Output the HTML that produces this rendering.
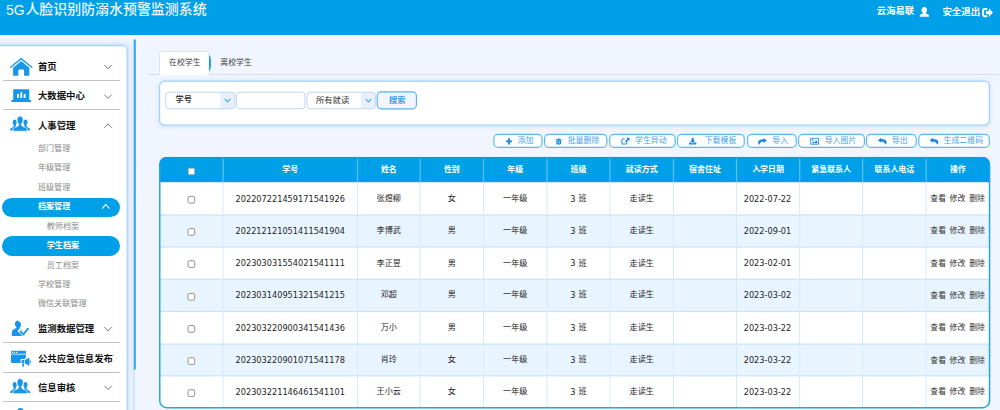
<!DOCTYPE html>
<html lang="zh-CN"><head><meta charset="utf-8"><title>5G人脸识别防溺水预警监测系统</title>
<style>
html,body{margin:0;padding:0}
body{width:1000px;height:410px;overflow:hidden;background:#f0f5ff;position:relative;font-family:"Liberation Sans",sans-serif}
.t{position:absolute;white-space:nowrap;overflow:visible;line-height:1;display:block;font-family:"Liberation Sans","Noto Sans CJK SC",sans-serif}
.hd{color:#f1f6ff;font-weight:500}
.w{color:#fff;font-weight:bold}
.k{color:#111;font-weight:bold}
.g{color:#8a8a8a}
.c4{color:#444}
.c2{color:#222;font-weight:500}
.c3{color:#333}
.sb{color:#3a9fe9;font-weight:bold}
.bt{color:#4a9fe8}
.cd{color:#1e1e1e}
.d{color:#1e1e1e;font-family:"DejaVu Sans","Liberation Sans",sans-serif}
.i{position:absolute;overflow:visible;pointer-events:none}
.hdr{position:absolute;left:0;top:0;width:1000px;height:35px;background:#00a0e9}
.side{position:absolute;left:-6px;top:45px;width:133.500px;height:380px;background:#fff;border-radius:5px;box-shadow:0 0 4px 1px rgba(150,200,252,.55);box-sizing:border-box}
.gut{position:absolute;left:128.500px;top:44px;width:4.3px;height:370px;background:#e7eeff}
.gutl{position:absolute;left:133.400px;top:368px;width:1.2px;height:50px;background:#a9d6fa}
.thumb{position:absolute;left:133.300px;top:39.300px;width:2.600px;height:330.500px;border-radius:1.3px;background:linear-gradient(90deg,#a5d9f7 0,#36a9eb 50%,#2aa4ea 100%)}
.sep{position:absolute;left:2.8px;width:117.200px;height:1.2px;background:#c2c2c2}
.pill{position:absolute;left:2.100px;width:117.900px;border-radius:10px;background:#00a0e9}
.tabline{position:absolute;left:147.800px;top:74px;width:860px;height:1px;background:#dcdfe6}
.tab{position:absolute;left:159px;top:51px;width:51px;height:23.800px;box-sizing:border-box;background:#fff;border:1px solid #e2e4ea;border-bottom:none;border-radius:3px 3px 0 0}
.tabarc{position:absolute;left:209.200px;top:55.200px;width:2.3px;height:15.4px;background:#1b9fe8;border-radius:0 100% 100% 0/0 50% 50% 0}
.panel{position:absolute;left:160px;top:81.500px;width:829px;height:43.5px;box-sizing:border-box;background:#fff;border-radius:5px;box-shadow:0 0 4px 1px rgba(150,200,252,.5)}
.sel{position:absolute;top:91.7px;height:17.5px;box-sizing:border-box;background:#fff;border:1px solid #c3d6f4;border-radius:3px;overflow:hidden}
.sel i{position:absolute;right:0;top:0;width:14.5px;height:100%;background:#e9f1fe}
.sbtn{position:absolute;left:376.600px;top:91.3px;width:40.4px;height:18.100px;box-sizing:border-box;background:#f0f5ff;border:1px solid #58b2f0;border-radius:4px}
.btn{position:absolute;top:134px;height:13.4px;box-sizing:border-box;background:#fff;border:1px solid #62b7f1;border-radius:5px}
.tbl{position:absolute;left:159.600px;top:157px;width:830.200px;height:251px;border-radius:7px;overflow:hidden;background:#fff}
.tblb{position:absolute;left:159.100px;top:157px;width:831.200px;height:251.300px;border-radius:7.5px;box-sizing:border-box;border:1.2px solid #229fe8;border-top:none;pointer-events:none}
.th{position:absolute;left:0;top:0;width:100%;height:25.100px;background:#00a0e9}
.tr{position:absolute;left:0;width:100%;box-sizing:border-box;border-bottom:1px solid #bfe3fa;background:#fff}
.tr.odd{background:#e9f5fe}
.vl{position:absolute;top:25px;width:1px;height:230px;background:#c6e6fb}
.vlh{position:absolute;top:1.5px;width:1.2px;height:23.600px;background:#4fb8f0}
.cb{position:absolute;width:7.8px;height:7.8px;box-sizing:border-box;border:1px solid #858585;border-radius:1.6px;background:#fff}
.cb.h{width:7.4px;height:7.2px;border-color:#9a9a9a;border-radius:1.2px}
</style></head><body>
<div class="hdr"></div>
<svg class="i" style="left:0;top:0" width="1000" height="410"><rect x="0" y="35.200" width="1000" height="1.3" fill="#fcfdff"/></svg>
<span class="t hd" style="left:5.90px;top:2.92px;width:20.04px;height:16.80px;font-size:14.00px;">5G</span>
<span class="t hd" style="left:25.40px;top:2.95px;width:182.35px;height:16.74px;font-size:13.95px;">人脸识别防溺水预警监测系统</span>
<span class="t w" style="left:876.80px;top:6.74px;width:38.40px;height:11.22px;font-size:9.35px;">云海易联</span>
<span class="t w" style="left:942.40px;top:6.69px;width:38.80px;height:11.34px;font-size:9.45px;">安全退出</span>
<svg class="i" style="left:919px;top:6px" width="11" height="12" viewBox="0 0 11 12"><path fill="#fff" d="M5.3 1.1c1.6 0 2.7 1.2 2.7 2.9 0 1.1-.5 2.2-1.200 2.800 0 .5.200.8.900 1.100l1.500.6c.6.3.8.7.8 1.300v1H.7v-1c0-.6.200-1 .8-1.300l1.500-.6c.7-.3.900-.6.900-1.100C3.100 6.200 2.600 5.100 2.600 4c0-1.700 1.100-2.900 2.700-2.900z"/></svg>
<svg class="i" style="left:981px;top:7px" width="13" height="11" viewBox="0 0 13 11"><path fill="none" stroke="#fff" stroke-width="2" stroke-linejoin="round" stroke-linecap="round" d="M5.500 2H3.500C2.700 2 2.100 2.600 2.100 3.400v4.400c0 .8.600 1.400 1.400 1.400h2"/><path fill="#fff" d="M4.900 3.900h3V1.200l4 4.400-4 4.400V7.300h-3z"/></svg>
<div class="side"></div>
<div class="gut"></div>
<svg class="i" style="left:0;top:0" width="1000" height="410"><defs><linearGradient id="tg" x1="0" x2="1" y1="0" y2="0"><stop offset="0" stop-color="#a8dbf8"/><stop offset=".45" stop-color="#38aaeb"/><stop offset="1" stop-color="#2aa4ea"/></linearGradient></defs><rect x="133.400" y="368" width="1.1" height="50" fill="#b4dcfa"/><rect x="133.300" y="39.300" width="2.500" height="330.400" rx="1.250" fill="url(#tg)"/><path d="M-5 45.600H122.700a4.500 4.500 0 0 1 4.500 4.500V415" fill="none" stroke="#a6d3fb" stroke-width="1.300"/></svg>
<span class="t k" style="left:37.90px;top:61.71px;width:19.80px;height:11.28px;font-size:9.40px;">首页</span>
<svg class="i" style="left:0;top:0" width="1000" height="410"><path d="M104.50 64.95L108.10 68.85L111.70 64.95" fill="none" stroke="#757575" stroke-width="1.0"/></svg>
<div class="sep" style="top:80.0px"></div>
<span class="t k" style="left:37.90px;top:91.41px;width:48.00px;height:11.28px;font-size:9.40px;">大数据中心</span>
<svg class="i" style="left:0;top:0" width="1000" height="410"><path d="M104.50 94.65L108.10 98.55L111.70 94.65" fill="none" stroke="#757575" stroke-width="1.0"/></svg>
<div class="sep" style="top:109.1px"></div>
<span class="t k" style="left:37.90px;top:120.61px;width:38.60px;height:11.28px;font-size:9.40px;">人事管理</span>
<svg class="i" style="left:0;top:0" width="1000" height="410"><path d="M104.50 127.75L108.10 123.85L111.70 127.75" fill="none" stroke="#757575" stroke-width="1.0"/></svg>
<span class="t g" style="left:37.90px;top:145.28px;width:33.48px;height:9.74px;font-size:8.12px;">部门管理</span>
<span class="t g" style="left:37.90px;top:164.48px;width:33.48px;height:9.74px;font-size:8.12px;">年级管理</span>
<span class="t g" style="left:37.90px;top:184.18px;width:33.48px;height:9.74px;font-size:8.12px;">班级管理</span>
<div class="pill" style="top:197.7px;height:19.4px"></div>
<span class="t w" style="left:37.90px;top:203.28px;width:33.48px;height:9.74px;font-size:8.12px;">档案管理</span>
<svg class="i" style="left:0;top:0" width="1000" height="410"><path d="M102.10 208.70L105.80 204.50L109.50 208.70" fill="none" stroke="#fff" stroke-width="1.1"/></svg>
<span class="t g" style="left:46.70px;top:222.78px;width:33.48px;height:9.74px;font-size:8.12px;">教师档案</span>
<div class="pill" style="top:236.1px;height:19.8px"></div>
<span class="t w" style="left:46.70px;top:242.08px;width:33.48px;height:9.74px;font-size:8.12px;">学生档案</span>
<span class="t g" style="left:46.70px;top:261.78px;width:33.48px;height:9.74px;font-size:8.12px;">员工档案</span>
<span class="t g" style="left:37.90px;top:280.98px;width:33.48px;height:9.74px;font-size:8.12px;">学校管理</span>
<span class="t g" style="left:37.90px;top:300.08px;width:49.72px;height:9.74px;font-size:8.12px;">微信关联管理</span>
<span class="t k" style="left:37.90px;top:323.81px;width:57.40px;height:11.28px;font-size:9.40px;">监测数据管理</span>
<svg class="i" style="left:0;top:0" width="1000" height="410"><path d="M104.50 327.05L108.10 330.95L111.70 327.05" fill="none" stroke="#757575" stroke-width="1.0"/></svg>
<div class="sep" style="top:342.2px"></div>
<span class="t k" style="left:37.90px;top:353.51px;width:76.20px;height:11.28px;font-size:9.40px;">公共应急信息发布</span>
<div class="sep" style="top:371.6px"></div>
<span class="t k" style="left:37.90px;top:382.51px;width:38.60px;height:11.28px;font-size:9.40px;">信息审核</span>
<svg class="i" style="left:0;top:0" width="1000" height="410"><path d="M104.50 385.75L108.10 389.65L111.70 385.75" fill="none" stroke="#757575" stroke-width="1.0"/></svg>
<div class="sep" style="top:400.9px"></div>
<svg class="i" style="left:0;top:0" width="1000" height="410" viewBox="0 0 1000 410"><path d="M10.6 67.3L21.2 58.700L31.8 67.3" fill="none" stroke="#1795ea" stroke-width="1.35" stroke-linejoin="miter" stroke-linecap="round"/><path fill="#1795ea" d="M13.1 67.7L21.2 60.9L29.3 67.7V75.7H24.1V70.6Q24.1 69.6 23.1 69.6H19.3Q18.3 69.6 18.3 70.6V75.7H13.100z"/></svg>
<svg class="i" style="left:0;top:0" width="1000" height="410" viewBox="0 0 1000 410"><path fill="#1795ea" d="M13.2 90.1q0-.8.800-.8h14.500q.8 0 .8.800V100.100h1.400q.6 0 .6.600v.4q0 .8-.8.800H12q-.8 0-.8-.8v-.4q0-.6.600-.6h1.400z"/><path fill="#fff" d="M17 94.100h1.900v3.900H17zM20.300 92.200h1.900v5.800h-1.900zM23.700 94.100h1.900v3.900h-1.900z"/></svg>
<svg class="i" style="left:0;top:0" width="1000" height="410" viewBox="0 0 1000 410"><g transform="translate(0,0)" fill="#1795ea"><path d="M14.7 119.6C15.9 119.6 16.7 120.7 16.7 122.2C16.7 123.3 16.3 124.3 15.700 124.900L15.7 125.400Q15.7 126 16.5 126.300L14 130.500L10.7 130.500Q9.9 130.500 10 129.700Q10.200 128.500 11.400 127.900L13.100 127.100Q13.700 126.800 13.700 126.100L13.700 124.900C13.100 124.300 12.700 123.300 12.700 122.200C12.700 120.700 13.500 119.600 14.700 119.600Z"/><path transform="translate(40.2,0) scale(-1,1)" d="M14.7 119.6C15.9 119.6 16.7 120.7 16.7 122.2C16.7 123.3 16.3 124.3 15.700 124.900L15.7 125.400Q15.7 126 16.5 126.300L14 130.500L10.7 130.500Q9.9 130.500 10 129.700Q10.200 128.500 11.400 127.900L13.100 127.100Q13.700 126.800 13.700 126.100L13.700 124.900C13.100 124.300 12.700 123.300 12.700 122.200C12.700 120.700 13.500 119.600 14.700 119.600Z"/><path stroke="#fff" stroke-width=".8" d="M20.1 116.1C22 116.1 23.2 117.7 23.2 119.8C23.2 121.6 22.5 123 21.6 123.8L21.6 124.8C21.6 125.6 22 126 22.9 126.4L25.6 127.6C26.8 128.2 27.3 129 27.3 130.2C27.3 130.9 26.9 131.3 26.2 131.3L14 131.3C13.3 131.3 12.9 130.9 12.9 130.2C12.9 129 13.4 128.2 14.6 127.6L17.3 126.400C18.2 126 18.6 125.6 18.6 124.8L18.6 123.8C17.7 123 17 121.6 17 119.8C17 117.7 18.2 116.1 20.1 116.1Z"/></g></svg>
<svg class="i" style="left:0;top:0" width="1000" height="410" viewBox="0 0 1000 410"><g transform="translate(0,262.5)" fill="#1795ea"><path d="M14.7 119.6C15.9 119.6 16.7 120.7 16.7 122.2C16.7 123.3 16.3 124.3 15.700 124.900L15.7 125.400Q15.7 126 16.5 126.300L14 130.500L10.7 130.500Q9.9 130.500 10 129.700Q10.200 128.500 11.400 127.900L13.100 127.100Q13.700 126.800 13.700 126.100L13.700 124.900C13.100 124.300 12.700 123.300 12.700 122.200C12.700 120.700 13.500 119.600 14.700 119.600Z"/><path transform="translate(40.2,0) scale(-1,1)" d="M14.7 119.6C15.9 119.6 16.7 120.7 16.7 122.2C16.7 123.3 16.3 124.3 15.700 124.900L15.7 125.400Q15.7 126 16.5 126.300L14 130.500L10.7 130.500Q9.9 130.500 10 129.700Q10.200 128.500 11.400 127.900L13.100 127.100Q13.700 126.800 13.700 126.100L13.700 124.900C13.100 124.300 12.700 123.300 12.700 122.200C12.700 120.700 13.500 119.600 14.700 119.600Z"/><path stroke="#fff" stroke-width=".8" d="M20.1 116.1C22 116.1 23.2 117.7 23.2 119.8C23.2 121.6 22.5 123 21.6 123.8L21.6 124.8C21.6 125.6 22 126 22.9 126.4L25.6 127.6C26.8 128.2 27.3 129 27.3 130.2C27.3 130.9 26.9 131.3 26.2 131.3L14 131.3C13.3 131.3 12.9 130.9 12.9 130.2C12.9 129 13.4 128.2 14.6 127.6L17.3 126.400C18.2 126 18.6 125.6 18.6 124.8L18.6 123.8C17.7 123 17 121.6 17 119.8C17 117.7 18.2 116.1 20.1 116.1Z"/></g></svg>
<svg class="i" style="left:0;top:0" width="1000" height="410" viewBox="0 0 1000 410"><g fill="#1795ea"><path d="M18.100 321.200c1.700 0 2.900 1.400 2.900 3.200 0 1.400-.6 2.700-1.500 3.400 0 .5.100.8.500 1.100l1.600.9 2.300 2.400 .9 3.900h-12.100c-.7 0-1.100-.5-1-1.200l.3-3.200c.1-1.300.7-2 1.800-2.500l1.900-.9c.6-.3.8-.6.8-1.100-.9-.7-1.500-2-1.500-3.400 0-1.800 1.200-3.200 2.900-3.200z"/></g><path d="M18.600 329.800L23.300 334.500L28.500 328" fill="none" stroke="#fff" stroke-width="3.300"/><path d="M19.800 331.100L23.300 334.500L28.400 328.100" fill="none" stroke="#1795ea" stroke-width="1.800"/></svg>
<svg class="i" style="left:0;top:0" width="1000" height="410" viewBox="0 0 1000 410"><path fill="#1795ea" d="M11 351.800q0-1 1-1h12.900q1 0 1 1v10.300q0 1-1 1H12q-1 0-1-1z"/><path fill="#fff" d="M11.800 351.800h1.100v1.100h-1.100zM13.900 351.800h1.100v1.100h-1.100zM16 351.800h1.100v1.100H16zM11 353.800h14.900v.6H11z"/><path fill="#fff" d="M20.600 358.900h3.600l5-2.600v3.200h2.400v4.600h-2.400v3.200l-3.300-1.700v2.500h-3.800v-2.900h-1.500z"/><path fill="#1795ea" d="M21.600 360h2.500v3.500h-2.500zM22.300 363.900h1.800v2.200q0 .6-.6.600h-.6q-.6 0-.6-.6zM24.800 360.100L29.500 357.700v8.100L24.800 363.400zM30 360.700h.9v2.100H30z"/></svg>
<svg class="i" style="left:0;top:0" width="1000" height="410" viewBox="0 0 1000 410"><circle cx="20.4" cy="411.300" r="3.300" fill="#1795ea"/></svg>
<div class="tabline"></div>
<div class="tab"></div><div class="tabarc"></div>
<span class="t c4" style="left:169.00px;top:59.19px;width:32.60px;height:9.48px;font-size:7.90px;">在校学生</span>
<span class="t c4" style="left:220.30px;top:59.19px;width:32.60px;height:9.48px;font-size:7.90px;">离校学生</span>
<div class="panel"></div>
<svg class="i" style="left:0;top:0" width="1000" height="410" viewBox="0 0 1000 410"><rect x="159.600" y="81.200" width="829.8" height="44" rx="5" fill="#fff" stroke="#a3d1fb" stroke-width="1.2"/></svg>
<svg class="i" style="left:0;top:0" width="1000" height="410" viewBox="0 0 1000 410"><rect x="165.80" y="92.20" width="69.00" height="16.50" rx="3" fill="#fff"/><clipPath id="c1653"><rect x="165.80" y="92.20" width="69.00" height="16.50" rx="3"/></clipPath><rect clip-path="url(#c1653)" x="220.3" y="91.7" width="15.0" height="17.5" fill="#e8f0fe"/><rect x="165.80" y="92.20" width="69.00" height="16.50" rx="3" fill="none" stroke="#c1d5f4" stroke-width="1.0"/></svg>
<svg class="i" style="left:0;top:0" width="1000" height="410" viewBox="0 0 1000 410"><rect x="236.40" y="92.20" width="68.60" height="16.50" rx="3" fill="#fff"/><rect x="236.40" y="92.20" width="68.60" height="16.50" rx="3" fill="none" stroke="#c1d5f4" stroke-width="1.0"/></svg>
<svg class="i" style="left:0;top:0" width="1000" height="410" viewBox="0 0 1000 410"><rect x="307.10" y="92.20" width="68.30" height="16.50" rx="3" fill="#fff"/><clipPath id="c3066"><rect x="307.10" y="92.20" width="68.30" height="16.50" rx="3"/></clipPath><rect clip-path="url(#c3066)" x="360.9" y="91.7" width="15.0" height="17.5" fill="#e8f0fe"/><rect x="307.10" y="92.20" width="68.30" height="16.50" rx="3" fill="none" stroke="#c1d5f4" stroke-width="1.0"/></svg>
<svg class="i" style="left:0;top:0" width="1000" height="410" viewBox="0 0 1000 410"><rect x="377.18" y="91.88" width="39.25" height="16.95" rx="4" fill="#f0f5ff"/><rect x="377.18" y="91.88" width="39.25" height="16.95" rx="4" fill="none" stroke="#55b1f0" stroke-width="1.15"/></svg>
<svg class="i" style="left:0;top:0" width="1000" height="410"><path d="M224.70 98.85L227.50 101.95L230.30 98.85" fill="none" stroke="#45a5ec" stroke-width="1.05"/></svg>
<svg class="i" style="left:0;top:0" width="1000" height="410"><path d="M365.70 98.85L368.50 101.95L371.30 98.85" fill="none" stroke="#45a5ec" stroke-width="1.05"/></svg>
<span class="t c2" style="left:175.50px;top:96.11px;width:17.50px;height:9.90px;font-size:8.25px;">学号</span>
<span class="t c3" style="left:316.00px;top:96.08px;width:34.20px;height:9.96px;font-size:8.30px;">所有就读</span>
<span class="t sb" style="left:388.90px;top:95.96px;width:17.70px;height:10.02px;font-size:8.35px;">搜索</span>
<svg class="i" style="left:0;top:0" width="1000" height="410" viewBox="0 0 1000 410"><rect x="493.85" y="134.4" width="48.10" height="13" rx="4.2" fill="#fff" stroke="#5fb8f2" stroke-width="1.2"/></svg>
<span class="t bt" style="left:517.50px;top:137.27px;width:16.90px;height:9.54px;font-size:7.95px;">添加</span>
<svg class="i" style="left:0;top:0" width="1000" height="410" viewBox="0 0 1000 410"><rect x="544.55" y="134.4" width="62.30" height="13" rx="4.2" fill="#fff" stroke="#5fb8f2" stroke-width="1.2"/></svg>
<span class="t bt" style="left:567.70px;top:137.27px;width:32.80px;height:9.54px;font-size:7.95px;">批量删除</span>
<svg class="i" style="left:0;top:0" width="1000" height="410" viewBox="0 0 1000 410"><rect x="609.75" y="134.4" width="65.40" height="13" rx="4.2" fill="#fff" stroke="#5fb8f2" stroke-width="1.2"/></svg>
<span class="t bt" style="left:635.00px;top:137.27px;width:32.80px;height:9.54px;font-size:7.95px;">学生异动</span>
<svg class="i" style="left:0;top:0" width="1000" height="410" viewBox="0 0 1000 410"><rect x="677.55" y="134.4" width="66.70" height="13" rx="4.2" fill="#fff" stroke="#5fb8f2" stroke-width="1.2"/></svg>
<span class="t bt" style="left:704.70px;top:137.27px;width:32.80px;height:9.54px;font-size:7.95px;">下载模板</span>
<svg class="i" style="left:0;top:0" width="1000" height="410" viewBox="0 0 1000 410"><rect x="747.55" y="134.4" width="48.70" height="13" rx="4.2" fill="#fff" stroke="#5fb8f2" stroke-width="1.2"/></svg>
<span class="t bt" style="left:772.30px;top:137.27px;width:16.90px;height:9.54px;font-size:7.95px;">导入</span>
<svg class="i" style="left:0;top:0" width="1000" height="410" viewBox="0 0 1000 410"><rect x="798.55" y="134.4" width="65.90" height="13" rx="4.2" fill="#fff" stroke="#5fb8f2" stroke-width="1.2"/></svg>
<span class="t bt" style="left:824.70px;top:137.27px;width:32.80px;height:9.54px;font-size:7.95px;">导入图片</span>
<svg class="i" style="left:0;top:0" width="1000" height="410" viewBox="0 0 1000 410"><rect x="866.55" y="134.4" width="49.60" height="13" rx="4.2" fill="#fff" stroke="#5fb8f2" stroke-width="1.2"/></svg>
<span class="t bt" style="left:891.80px;top:137.27px;width:16.90px;height:9.54px;font-size:7.95px;">导出</span>
<svg class="i" style="left:0;top:0" width="1000" height="410" viewBox="0 0 1000 410"><rect x="918.75" y="134.4" width="70.50" height="13" rx="4.2" fill="#fff" stroke="#5fb8f2" stroke-width="1.2"/></svg>
<span class="t bt" style="left:943.50px;top:137.27px;width:40.75px;height:9.54px;font-size:7.95px;">生成二维码</span>
<svg class="i" style="left:0;top:0" width="1000" height="410" viewBox="0 0 1000 410"><path fill="#1e86de" d="M508 138.300h1.900v2.100h2.100v1.900h-2.100v2.100H508v-2.100h-2.100v-1.900H508z"/></svg>
<svg class="i" style="left:0;top:0" width="1000" height="410" viewBox="0 0 1000 410"><path fill="#1e86de" d="M557.700 138.500h2v.7h1.900v1h-5.800v-1h1.900zM556.300 140.600h4.800v3q0 .8-.8.800h-3.200q-.8 0-.8-.8z"/><path fill="#fff" d="M557.600 141.400h.6v2.200h-.6zM559.200 141.400h.6v2.200h-.6z"/></svg>
<svg class="i" style="left:0;top:0" width="1000" height="410" viewBox="0 0 1000 410"><path fill="none" stroke="#1e86de" stroke-width="1" d="M626.900 141.800v1.300q0 .9-.9.900h-3.300q-.9 0-.9-.9v-3.300q0-.9.900-.9h2.100"/><path fill="#1e86de" d="M626.300 137.700h3.300v3.300l-1.100-1.100-2.500 2.500-1.100-1.100 2.500-2.500z"/></svg>
<svg class="i" style="left:0;top:0" width="1000" height="410" viewBox="0 0 1000 410"><path fill="#1e86de" d="M691.700 137.700h2v2.700h1.700l-2.700 2.700-2.700-2.700h1.700zM689 142.500h1.900l1.800 1 1.800-1h1.900v1.900H689z"/></svg>
<svg class="i" style="left:0;top:0" width="1000" height="410" viewBox="0 0 1000 410"><path transform="translate(758.1,137.9)" fill="#1e86de" d="M5.300 0L8.800 2.500L5.300 5V3.600C3.300 3.600 1.900 4.400 1.300 7C.4 6.300 0 5.300 0 4.400C0 2.400 2.200 1.300 5.300 1.300z"/></svg>
<svg class="i" style="left:0;top:0" width="1000" height="410" viewBox="0 0 1000 410"><path fill="#1e86de" d="M810.300 137.900h8.500v6.700h-8.500z"/><path fill="#fff" d="M811.100 138.700h6.900v5.100h-6.900z"/><path fill="#1e86de" d="M811.700 143.300l1.700-1.900 1.100 1.100 1.700-2.200 1.300 1.700v1.300z"/><circle cx="812.700" cy="140.100" r=".8" fill="#1e86de"/></svg>
<svg class="i" style="left:0;top:0" width="1000" height="410" viewBox="0 0 1000 410"><path transform="translate(886.5999999999999,137.8) scale(-1,1)" fill="#1e86de" d="M5.300 0L8.800 2.500L5.300 5V3.600C3.300 3.600 1.900 4.400 1.300 7C.4 6.300 0 5.300 0 4.400C0 2.400 2.200 1.300 5.300 1.300z"/></svg>
<svg class="i" style="left:0;top:0" width="1000" height="410" viewBox="0 0 1000 410"><path transform="translate(938.4,137.8) scale(-1,1)" fill="#1e86de" d="M5.300 0L8.800 2.500L5.300 5V3.600C3.300 3.600 1.900 4.400 1.300 7C.4 6.300 0 5.300 0 4.400C0 2.400 2.200 1.300 5.300 1.300z"/></svg>
<svg class="i" style="left:0;top:0" width="1000" height="410" viewBox="0 0 1000 410"><clipPath id="tc"><rect x="159.0" y="156.8" width="831.3" height="251.59999999999997" rx="7.5"/></clipPath><g clip-path="url(#tc)"><rect x="159.0" y="156.8" width="831.3" height="251.59999999999997" fill="#fff"/><rect x="159.0" y="215.0" width="831.3" height="32.0" fill="#e9f5fe"/><rect x="159.0" y="279.3" width="831.3" height="32.2" fill="#e9f5fe"/><rect x="159.0" y="344.1" width="831.3" height="31.7" fill="#e9f5fe"/><rect x="159.0" y="214.4" width="831.3" height="1.2" fill="#c3e5fa"/><rect x="159.0" y="246.4" width="831.3" height="1.2" fill="#c3e5fa"/><rect x="159.0" y="278.7" width="831.3" height="1.2" fill="#c3e5fa"/><rect x="159.0" y="310.9" width="831.3" height="1.2" fill="#c3e5fa"/><rect x="159.0" y="343.5" width="831.3" height="1.2" fill="#c3e5fa"/><rect x="159.0" y="375.2" width="831.3" height="1.2" fill="#c3e5fa"/><rect x="222.55" y="182.2" width="1" height="230" fill="#d3ebfb"/><rect x="356.95" y="182.2" width="1" height="230" fill="#d3ebfb"/><rect x="419.65" y="182.2" width="1" height="230" fill="#d3ebfb"/><rect x="482.95" y="182.2" width="1" height="230" fill="#d3ebfb"/><rect x="546.45" y="182.2" width="1" height="230" fill="#d3ebfb"/><rect x="609.45" y="182.2" width="1" height="230" fill="#d3ebfb"/><rect x="672.95" y="182.2" width="1" height="230" fill="#d3ebfb"/><rect x="735.95" y="182.2" width="1" height="230" fill="#d3ebfb"/><rect x="799.15" y="182.2" width="1" height="230" fill="#d3ebfb"/><rect x="862.05" y="182.2" width="1" height="230" fill="#d3ebfb"/><rect x="925.65" y="182.2" width="1" height="230" fill="#d3ebfb"/><rect x="159.0" y="156.8" width="831.3" height="25.4" fill="#00a0e9"/><rect x="222.50" y="158.6" width="1.2" height="23.6" fill="#5fc1f3"/><rect x="356.90" y="158.6" width="1.2" height="23.6" fill="#5fc1f3"/><rect x="419.60" y="158.6" width="1.2" height="23.6" fill="#5fc1f3"/><rect x="482.90" y="158.6" width="1.2" height="23.6" fill="#5fc1f3"/><rect x="546.40" y="158.6" width="1.2" height="23.6" fill="#5fc1f3"/><rect x="609.40" y="158.6" width="1.2" height="23.6" fill="#5fc1f3"/><rect x="672.90" y="158.6" width="1.2" height="23.6" fill="#5fc1f3"/><rect x="735.90" y="158.6" width="1.2" height="23.6" fill="#5fc1f3"/><rect x="799.10" y="158.6" width="1.2" height="23.6" fill="#5fc1f3"/><rect x="862.00" y="158.6" width="1.2" height="23.6" fill="#5fc1f3"/><rect x="925.60" y="158.6" width="1.2" height="23.6" fill="#5fc1f3"/></g><path d="M159.75 164.8V400.4a7 7 0 0 0 7 7.250H982.55a7 7 0 0 0 7-7.250V164.8" fill="none" stroke="#27a3ea" stroke-width="1.5"/></svg>
<span class="t w" style="left:282.35px;top:166.27px;width:16.90px;height:9.54px;font-size:7.95px;">学号</span>
<span class="t w" style="left:380.90px;top:166.27px;width:16.90px;height:9.54px;font-size:7.95px;">姓名</span>
<span class="t w" style="left:443.90px;top:166.27px;width:16.90px;height:9.54px;font-size:7.95px;">性别</span>
<span class="t w" style="left:507.30px;top:166.27px;width:16.90px;height:9.54px;font-size:7.95px;">年级</span>
<span class="t w" style="left:570.55px;top:166.27px;width:16.90px;height:9.54px;font-size:7.95px;">班级</span>
<span class="t w" style="left:625.85px;top:166.27px;width:32.80px;height:9.54px;font-size:7.95px;">就读方式</span>
<span class="t w" style="left:689.10px;top:166.27px;width:32.80px;height:9.54px;font-size:7.95px;">宿舍住址</span>
<span class="t w" style="left:752.20px;top:166.27px;width:32.80px;height:9.54px;font-size:7.95px;">入学日期</span>
<span class="t w" style="left:811.28px;top:166.27px;width:40.75px;height:9.54px;font-size:7.95px;">紧急联系人</span>
<span class="t w" style="left:874.53px;top:166.27px;width:40.75px;height:9.54px;font-size:7.95px;">联系人电话</span>
<span class="t w" style="left:950.10px;top:166.27px;width:16.90px;height:9.54px;font-size:7.95px;">操作</span>
<svg class="i" style="left:0;top:0" width="1000" height="410" viewBox="0 0 1000 410"><rect x="188.300" y="168.300" width="6.2" height="6.2" rx="1" fill="#fff" stroke="#b5a79a" stroke-width=".7"/></svg>
<svg class="i" style="left:0;top:0" width="1000" height="410" viewBox="0 0 1000 410"><rect x="188" y="196.40" width="6.7" height="6.7" rx="1.6" fill="#fff" stroke="#8a8a8a" stroke-width=".95"/></svg>
<span class="t d" style="left:235.52px;top:194.67px;width:110.56px;height:9.84px;font-size:8.20px;">202207221459171541926</span>
<span class="t cd" style="left:376.62px;top:195.06px;width:25.45px;height:9.78px;font-size:8.15px;">张煜柳</span>
<span class="t cd" style="left:447.78px;top:195.06px;width:9.15px;height:9.78px;font-size:8.15px;">女</span>
<span class="t cd" style="left:503.02px;top:195.06px;width:25.45px;height:9.78px;font-size:8.15px;">一年级</span>
<span class="t d" style="left:570.20px;top:194.67px;width:6.22px;height:9.84px;font-size:8.20px;">3</span>
<span class="t cd" style="left:578.50px;top:195.06px;width:9.15px;height:9.78px;font-size:8.15px;">班</span>
<span class="t cd" style="left:629.52px;top:195.06px;width:25.45px;height:9.78px;font-size:8.15px;">走读生</span>
<span class="t d" style="left:743.69px;top:194.67px;width:49.82px;height:9.84px;font-size:8.20px;">2022-07-22</span>
<span class="t c3" style="left:930.30px;top:195.22px;width:16.70px;height:9.42px;font-size:7.85px;">查看</span>
<span class="t c3" style="left:949.60px;top:195.22px;width:16.70px;height:9.42px;font-size:7.85px;">修改</span>
<span class="t c3" style="left:969.20px;top:195.22px;width:16.70px;height:9.42px;font-size:7.85px;">删除</span>
<svg class="i" style="left:0;top:0" width="1000" height="410" viewBox="0 0 1000 410"><rect x="188" y="228.55" width="6.7" height="6.7" rx="1.6" fill="#fff" stroke="#8a8a8a" stroke-width=".95"/></svg>
<span class="t d" style="left:235.52px;top:226.87px;width:110.56px;height:9.84px;font-size:8.20px;">202212121051411541904</span>
<span class="t cd" style="left:376.62px;top:227.26px;width:25.45px;height:9.78px;font-size:8.15px;">李博武</span>
<span class="t cd" style="left:447.78px;top:227.26px;width:9.15px;height:9.78px;font-size:8.15px;">男</span>
<span class="t cd" style="left:503.02px;top:227.26px;width:25.45px;height:9.78px;font-size:8.15px;">一年级</span>
<span class="t d" style="left:570.20px;top:226.87px;width:6.22px;height:9.84px;font-size:8.20px;">3</span>
<span class="t cd" style="left:578.50px;top:227.26px;width:9.15px;height:9.78px;font-size:8.15px;">班</span>
<span class="t cd" style="left:629.52px;top:227.26px;width:25.45px;height:9.78px;font-size:8.15px;">走读生</span>
<span class="t d" style="left:743.69px;top:226.87px;width:49.82px;height:9.84px;font-size:8.20px;">2022-09-01</span>
<span class="t c3" style="left:930.30px;top:227.42px;width:16.70px;height:9.42px;font-size:7.85px;">查看</span>
<span class="t c3" style="left:949.60px;top:227.42px;width:16.70px;height:9.42px;font-size:7.85px;">修改</span>
<span class="t c3" style="left:969.20px;top:227.42px;width:16.70px;height:9.42px;font-size:7.85px;">删除</span>
<svg class="i" style="left:0;top:0" width="1000" height="410" viewBox="0 0 1000 410"><rect x="188" y="260.75" width="6.7" height="6.7" rx="1.6" fill="#fff" stroke="#8a8a8a" stroke-width=".95"/></svg>
<span class="t d" style="left:235.52px;top:259.37px;width:110.56px;height:9.84px;font-size:8.20px;">202303031554021541111</span>
<span class="t cd" style="left:376.62px;top:259.76px;width:25.45px;height:9.78px;font-size:8.15px;">李正昱</span>
<span class="t cd" style="left:447.78px;top:259.76px;width:9.15px;height:9.78px;font-size:8.15px;">男</span>
<span class="t cd" style="left:503.02px;top:259.76px;width:25.45px;height:9.78px;font-size:8.15px;">一年级</span>
<span class="t d" style="left:570.20px;top:259.37px;width:6.22px;height:9.84px;font-size:8.20px;">3</span>
<span class="t cd" style="left:578.50px;top:259.76px;width:9.15px;height:9.78px;font-size:8.15px;">班</span>
<span class="t cd" style="left:629.52px;top:259.76px;width:25.45px;height:9.78px;font-size:8.15px;">走读生</span>
<span class="t d" style="left:743.69px;top:259.37px;width:49.82px;height:9.84px;font-size:8.20px;">2023-02-01</span>
<span class="t c3" style="left:930.30px;top:259.92px;width:16.70px;height:9.42px;font-size:7.85px;">查看</span>
<span class="t c3" style="left:949.60px;top:259.92px;width:16.70px;height:9.42px;font-size:7.85px;">修改</span>
<span class="t c3" style="left:969.20px;top:259.92px;width:16.70px;height:9.42px;font-size:7.85px;">删除</span>
<svg class="i" style="left:0;top:0" width="1000" height="410" viewBox="0 0 1000 410"><rect x="188" y="293.45" width="6.7" height="6.7" rx="1.6" fill="#fff" stroke="#8a8a8a" stroke-width=".95"/></svg>
<span class="t d" style="left:235.52px;top:291.07px;width:110.56px;height:9.84px;font-size:8.20px;">202303140951321541215</span>
<span class="t cd" style="left:380.70px;top:291.46px;width:17.30px;height:9.78px;font-size:8.15px;">邓超</span>
<span class="t cd" style="left:447.78px;top:291.46px;width:9.15px;height:9.78px;font-size:8.15px;">男</span>
<span class="t cd" style="left:503.02px;top:291.46px;width:25.45px;height:9.78px;font-size:8.15px;">一年级</span>
<span class="t d" style="left:570.20px;top:291.07px;width:6.22px;height:9.84px;font-size:8.20px;">3</span>
<span class="t cd" style="left:578.50px;top:291.46px;width:9.15px;height:9.78px;font-size:8.15px;">班</span>
<span class="t cd" style="left:629.52px;top:291.46px;width:25.45px;height:9.78px;font-size:8.15px;">走读生</span>
<span class="t d" style="left:743.69px;top:291.07px;width:49.82px;height:9.84px;font-size:8.20px;">2023-03-02</span>
<span class="t c3" style="left:930.30px;top:291.62px;width:16.70px;height:9.42px;font-size:7.85px;">查看</span>
<span class="t c3" style="left:949.60px;top:291.62px;width:16.70px;height:9.42px;font-size:7.85px;">修改</span>
<span class="t c3" style="left:969.20px;top:291.62px;width:16.70px;height:9.42px;font-size:7.85px;">删除</span>
<svg class="i" style="left:0;top:0" width="1000" height="410" viewBox="0 0 1000 410"><rect x="188" y="325.55" width="6.7" height="6.7" rx="1.6" fill="#fff" stroke="#8a8a8a" stroke-width=".95"/></svg>
<span class="t d" style="left:235.52px;top:323.67px;width:110.56px;height:9.84px;font-size:8.20px;">202303220900341541436</span>
<span class="t cd" style="left:380.70px;top:324.06px;width:17.30px;height:9.78px;font-size:8.15px;">万小</span>
<span class="t cd" style="left:447.78px;top:324.06px;width:9.15px;height:9.78px;font-size:8.15px;">男</span>
<span class="t cd" style="left:503.02px;top:324.06px;width:25.45px;height:9.78px;font-size:8.15px;">一年级</span>
<span class="t d" style="left:570.20px;top:323.67px;width:6.22px;height:9.84px;font-size:8.20px;">3</span>
<span class="t cd" style="left:578.50px;top:324.06px;width:9.15px;height:9.78px;font-size:8.15px;">班</span>
<span class="t cd" style="left:629.52px;top:324.06px;width:25.45px;height:9.78px;font-size:8.15px;">走读生</span>
<span class="t d" style="left:743.69px;top:323.67px;width:49.82px;height:9.84px;font-size:8.20px;">2023-03-22</span>
<span class="t c3" style="left:930.30px;top:324.22px;width:16.70px;height:9.42px;font-size:7.85px;">查看</span>
<span class="t c3" style="left:949.60px;top:324.22px;width:16.70px;height:9.42px;font-size:7.85px;">修改</span>
<span class="t c3" style="left:969.20px;top:324.22px;width:16.70px;height:9.42px;font-size:7.85px;">删除</span>
<svg class="i" style="left:0;top:0" width="1000" height="410" viewBox="0 0 1000 410"><rect x="188" y="357.75" width="6.7" height="6.7" rx="1.6" fill="#fff" stroke="#8a8a8a" stroke-width=".95"/></svg>
<span class="t d" style="left:235.52px;top:355.97px;width:110.56px;height:9.84px;font-size:8.20px;">202303220901071541178</span>
<span class="t cd" style="left:380.70px;top:356.36px;width:17.30px;height:9.78px;font-size:8.15px;">肖玲</span>
<span class="t cd" style="left:447.78px;top:356.36px;width:9.15px;height:9.78px;font-size:8.15px;">女</span>
<span class="t cd" style="left:503.02px;top:356.36px;width:25.45px;height:9.78px;font-size:8.15px;">一年级</span>
<span class="t d" style="left:570.20px;top:355.97px;width:6.22px;height:9.84px;font-size:8.20px;">3</span>
<span class="t cd" style="left:578.50px;top:356.36px;width:9.15px;height:9.78px;font-size:8.15px;">班</span>
<span class="t cd" style="left:629.52px;top:356.36px;width:25.45px;height:9.78px;font-size:8.15px;">走读生</span>
<span class="t d" style="left:743.69px;top:355.97px;width:49.82px;height:9.84px;font-size:8.20px;">2023-03-22</span>
<span class="t c3" style="left:930.30px;top:356.52px;width:16.70px;height:9.42px;font-size:7.85px;">查看</span>
<span class="t c3" style="left:949.60px;top:356.52px;width:16.70px;height:9.42px;font-size:7.85px;">修改</span>
<span class="t c3" style="left:969.20px;top:356.52px;width:16.70px;height:9.42px;font-size:7.85px;">删除</span>
<svg class="i" style="left:0;top:0" width="1000" height="410" viewBox="0 0 1000 410"><rect x="188" y="389.75" width="6.7" height="6.7" rx="1.6" fill="#fff" stroke="#8a8a8a" stroke-width=".95"/></svg>
<span class="t d" style="left:235.52px;top:387.87px;width:110.56px;height:9.84px;font-size:8.20px;">202303221146461541101</span>
<span class="t cd" style="left:376.62px;top:388.26px;width:25.45px;height:9.78px;font-size:8.15px;">王小云</span>
<span class="t cd" style="left:447.78px;top:388.26px;width:9.15px;height:9.78px;font-size:8.15px;">女</span>
<span class="t cd" style="left:503.02px;top:388.26px;width:25.45px;height:9.78px;font-size:8.15px;">一年级</span>
<span class="t d" style="left:570.20px;top:387.87px;width:6.22px;height:9.84px;font-size:8.20px;">3</span>
<span class="t cd" style="left:578.50px;top:388.26px;width:9.15px;height:9.78px;font-size:8.15px;">班</span>
<span class="t cd" style="left:629.52px;top:388.26px;width:25.45px;height:9.78px;font-size:8.15px;">走读生</span>
<span class="t d" style="left:743.69px;top:387.87px;width:49.82px;height:9.84px;font-size:8.20px;">2023-03-22</span>
<span class="t c3" style="left:930.30px;top:388.42px;width:16.70px;height:9.42px;font-size:7.85px;">查看</span>
<span class="t c3" style="left:949.60px;top:388.42px;width:16.70px;height:9.42px;font-size:7.85px;">修改</span>
<span class="t c3" style="left:969.20px;top:388.42px;width:16.70px;height:9.42px;font-size:7.85px;">删除</span>
</body></html>
